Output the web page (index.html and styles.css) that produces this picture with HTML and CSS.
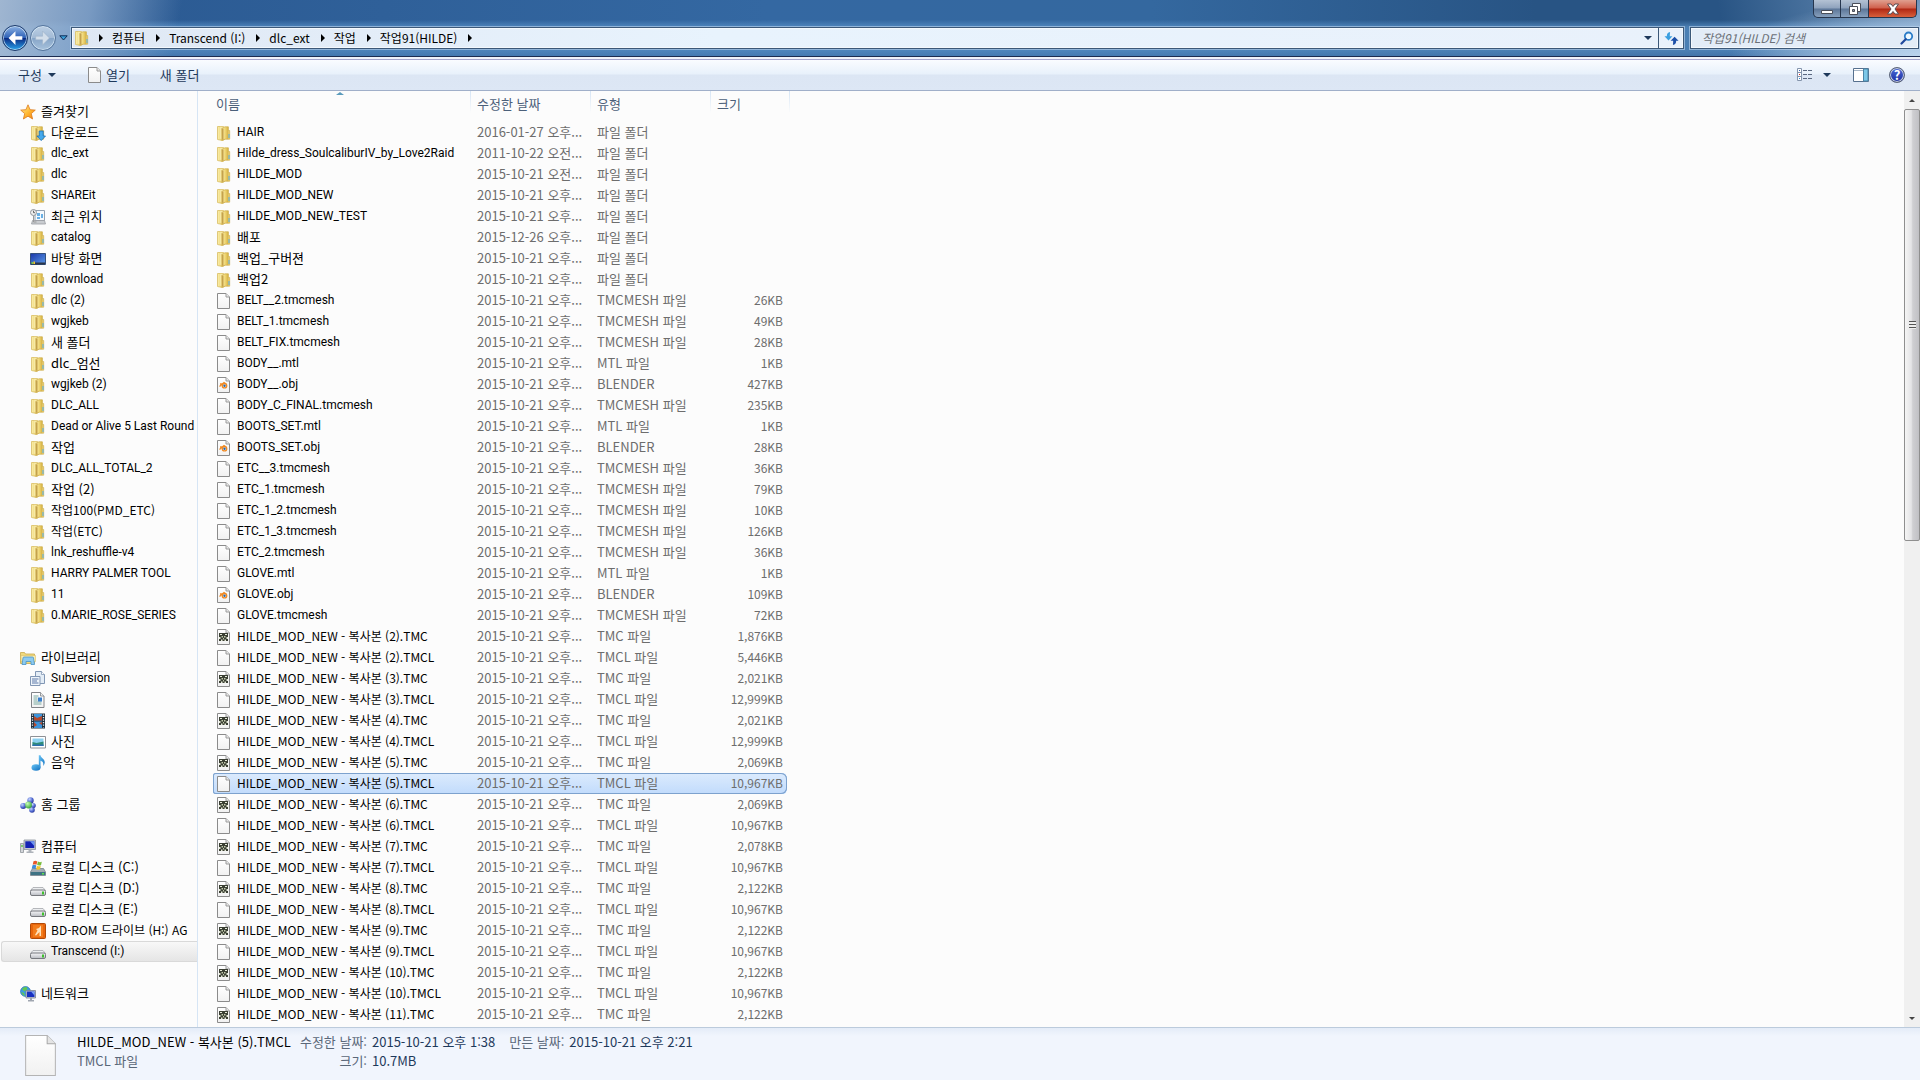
FILE: index.html
```html
<!DOCTYPE html>
<html lang="ko">
<head>
  <meta charset="UTF-8">
  <title>작업91(HILDE)</title>
  <link rel="stylesheet" href="styles.css">
</head>
<body>
  <!-- Icon sprite, referenced with <use> -->
  <svg class="sprite" aria-hidden="true">
    <defs>
      <linearGradient id="g-gold" x1="0" x2="1" y1="0" y2="0"><stop offset="0" stop-color="#fbf0b0"/><stop offset=".5" stop-color="#f0d878"/><stop offset="1" stop-color="#d6b040"/></linearGradient>
      <linearGradient id="g-star" x1="0" x2="1" y1="0" y2="1"><stop offset="0" stop-color="#fff3a0"/><stop offset=".55" stop-color="#ffb52e"/><stop offset="1" stop-color="#f07a10"/></linearGradient>
      <linearGradient id="g-page" x1="0" x2="0" y1="0" y2="1"><stop offset="0" stop-color="#fff"/><stop offset="1" stop-color="#f1f1f1"/></linearGradient>
      <linearGradient id="g-disk" x1="0" x2="0" y1="0" y2="1"><stop offset="0" stop-color="#f6f6f8"/><stop offset="1" stop-color="#b9bcc2"/></linearGradient>
      <linearGradient id="g-blue" x1="0" x2="1" y1="0" y2="1"><stop offset="0" stop-color="#1a36a8"/><stop offset="1" stop-color="#5c9be8"/></linearGradient>
      <linearGradient id="g-note" x1="0" x2="1" y1="0" y2="1"><stop offset="0" stop-color="#6ac4f4"/><stop offset="1" stop-color="#0d6fc0"/></linearGradient>
      <radialGradient id="g-ball" cx=".35" cy=".3" r=".8"><stop offset="0" stop-color="#c4d4ff"/><stop offset=".6" stop-color="#4a62cc"/><stop offset="1" stop-color="#26338c"/></radialGradient>
      <radialGradient id="g-green" cx=".35" cy=".3" r=".8"><stop offset="0" stop-color="#c8ffb8"/><stop offset="1" stop-color="#2c9c2c"/></radialGradient>
    </defs>
    <symbol id="folder" viewBox="0 0 16 16">
      <path d="M1.500 1.500h6l1 1v12l-2 1-5-1z" fill="url(#g-gold)" stroke="#d8bc62" stroke-width=".8"/>
      <path d="M4 1.800h5.500v12H4z" fill="#f6e9a6"/>
      <path d="M5.600 3.500 9 1.800h3.400v12.400H9l-3.200 1.300z" fill="url(#g-gold)" stroke="#cfae4c" stroke-width=".7"/>
      <path d="M6.800 3.500v11.300" stroke="#b8923a" stroke-width="1.200"/>
      <path d="M12.400 5.500h1.300v8.700h-1.300" fill="#e5c964" stroke="#cfae4e" stroke-width=".6"/>
      <path d="M13 9v4" stroke="#55aee6" stroke-width="1"/>
    </symbol>
    <symbol id="download" viewBox="0 0 16 16">
      <use href="#folder"/>
      <path d="M9.200 6h4v5h2.300l-4.300 4.600L6.900 11h2.300z" fill="#44a9ec" stroke="#1b6db3" stroke-width=".8"/>
    </symbol>
    <symbol id="recent" viewBox="0 0 16 16">
      <path d="M5 1.500h9.500v10H5z" fill="#f4f9fd" stroke="#94a2b0"/>
      <path d="M7 4h3v3H7zM11 5h2v4h-2zM7 8h3v2H7z" fill="#6ab0e4"/>
      <path d="M2.500 11.500h12l1 3.500h-14z" fill="#c9ccd0" stroke="#9a9da2" stroke-width=".8"/>
      <path d="M3.500 7v6h3" fill="none" stroke="#999" stroke-width="1"/>
      <circle cx="3.500" cy="3.500" r="3" fill="#eee" stroke="#909498"/>
      <path d="M3.500 1.700v2h1.600" fill="none" stroke="#444" stroke-width=".8"/>
    </symbol>
    <symbol id="desktop" viewBox="0 0 16 16">
      <path d="M.5 2.500h15v11H.5z" fill="url(#g-blue)" stroke="#34507e"/>
      <path d="M1 11.500h14v2H1z" fill="#2b3648"/>
      <path d="M1.400 11h2v2h-2z" fill="#6fc45c"/><path d="M3.400 10.500h1.600v2.500H3.400z" fill="#f2c232"/>
    </symbol>
    <symbol id="star" viewBox="0 0 16 16">
      <path d="M8 .8l2.100 4.900 5.200.4-4 3.500 1.300 5.400L8 12.200 3.400 15l1.300-5.400-4-3.500 5.200-.4z" fill="url(#g-star)" stroke="#dd7a1c" stroke-width=".8"/>
    </symbol>
    <symbol id="library" viewBox="0 0 16 16">
      <path d="M.5 2.500h4l1 1.500h9v9.500H.5z" fill="#f0d97c" stroke="#c9a94d" stroke-width=".8"/>
      <path d="M1 5.500h14.500v6H1z" fill="#faedb0" stroke="#dabf68" stroke-width=".6"/>
      <path d="M3 8q0-1 1-1h8.500q1 0 1 1l1 6.500h-3.500v-3h-5v3H2z" fill="#8ccaf0" stroke="#4793c8" stroke-width=".8"/>
    </symbol>
    <symbol id="subversion" viewBox="0 0 16 16">
      <path d="M5.500.5h6l3 3v9h-9z" fill="#e4edf6" stroke="#8297b4"/>
      <path d="M11.500.5v3h3" fill="#fff" stroke="#8297b4" stroke-width=".8"/>
      <path d="M.5 5.500h9.500v9H.5z" fill="#eef4fa" stroke="#8297b4"/>
      <path d="M2 8h6.500M2 10h5M2 12h6.500" stroke="#5c79a8"/>
    </symbol>
    <symbol id="document" viewBox="0 0 16 16">
      <path d="M1.500.5h9l3.500 3.500v11.500H1.500z" fill="url(#g-page)" stroke="#828488"/>
      <path d="M10.500.5v3.500H14" fill="#eee" stroke="#828488" stroke-width=".8"/>
      <path d="M3.500 4h5M3.500 6h4M3.500 8h4M3.500 10h8M3.500 12h8" stroke="#7ba9a0"/>
      <path d="M8 5.500h4v4H8z" fill="#3a7fcc"/>
    </symbol>
    <symbol id="video" viewBox="0 0 16 16">
      <path d="M1 .5h14v15H1z" fill="#1f2e3c"/>
      <path d="M4 1h8v6.500H4zM4 8.500h8V15H4z" fill="#3b94dc"/>
      <path d="M4 3l3 2 5-2v4.500H4zM4 9l3 3-3 2zM12 9v3l-3-2z" fill="#b4482c"/>
      <path d="M2.500 1.500v13M13.500 1.500v13" stroke="#e6edf2" stroke-width="1.300" stroke-dasharray="1.300 1.200"/>
    </symbol>
    <symbol id="photo" viewBox="0 0 16 16">
      <path d="M.5 2.500h15v11.500H.5z" fill="#fff" stroke="#8e9196"/>
      <path d="M2.500 4.500h11V12h-11z" fill="#8cd0f0"/>
      <path d="M2.500 8l4 1 7-1.500V12h-11z" fill="#2f8c78"/>
      <path d="M2.500 10.500h11V12h-11z" fill="#2c6fb0"/>
    </symbol>
    <symbol id="music" viewBox="0 0 16 16">
      <ellipse cx="6" cy="12.500" rx="4.500" ry="3.200" fill="url(#g-note)"/>
      <path d="M8.800.3h1.700c.3 3 4.500 3.500 4.200 7.200-.1 1.500-.8 2.600-1.600 3.400.9-3.200-.6-4.700-2.600-5.200v7H8.800z" fill="url(#g-note)"/>
    </symbol>
    <symbol id="homegroup" viewBox="0 0 16 16">
      <circle cx="10.500" cy="3.500" r="3.200" fill="url(#g-ball)"/>
      <circle cx="3.200" cy="9" r="3" fill="url(#g-ball)"/>
      <circle cx="13.200" cy="8.500" r="2.600" fill="url(#g-ball)"/>
      <circle cx="12" cy="13" r="2.800" fill="url(#g-ball)"/>
      <circle cx="8.500" cy="8" r="3.400" fill="url(#g-green)"/>
    </symbol>
    <symbol id="computer" viewBox="0 0 16 16">
      <path d="M.5 4.500h3v9h-3z" fill="#d3d6da" stroke="#8f949b" stroke-width=".8"/>
      <path d="M1.300 6h1.400v2H1.300z" fill="#55c83c"/>
      <path d="M4 1h11.500v9.500H4z" fill="#c4c9d0" stroke="#8c929c" stroke-width=".8"/>
      <path d="M5.300 2.300h9V9h-9z" fill="#1523b4"/><path d="M10 2.300h4.300V7z" fill="#6f97f0"/>
      <path d="M8.500 10.500h3v2h2v1.500h-7v-1.500h2z" fill="#aeb3ba"/>
    </symbol>
    <symbol id="system" viewBox="0 0 16 16">
      <path d="M2.500 8.500h11l2 3.500v3.500H.5V12z" fill="#a2abb2" stroke="#74808a" stroke-width=".8"/>
      <path d="M.8 12h14.400v3H.8z" fill="#3e7284"/><path d="M12 13h2v1.500h-2z" fill="#5ce04a"/>
      <path d="M3.500 1.200q2-1 3.800.2l-.8 3.400q-1.800-1-3.800-.1z" fill="#e8582a"/>
      <path d="M7.900 1.600q2 1 3.900.2L11 5.200q-2 .8-3.900-.1z" fill="#78bc3c"/>
      <path d="M2.500 5.300q2-1 3.800.1l-.8 3.500q-1.800-1-3.800-.1z" fill="#3c8cdc"/>
      <path d="M6.900 5.700q2 1 3.900.2L10 9.300q-2 .8-3.900-.1z" fill="#f4c42c"/>
    </symbol>
    <symbol id="drive" viewBox="0 0 16 16">
      <path d="M3 6.500h10l2.500 3H.5z" fill="#eceef0" stroke="#a4a7ac" stroke-width=".8"/>
      <rect x=".5" y="9" width="15" height="5.500" rx="1.500" fill="url(#g-disk)" stroke="#77797e"/>
      <path d="M12 10.500h2v3h-2z" fill="#3fc02c"/>
    </symbol>
    <symbol id="bdrom" viewBox="0 0 16 16">
      <rect x=".5" y=".5" width="15" height="15" rx="1" fill="#e8660c" stroke="#b04a08"/>
      <path d="M3 2h10v12H3z" fill="#f27c1c"/>
      <path d="M11 2.500v10.500H9.500V9L6 12.500 5 12l2.500-4.500L6 6l3-1z" fill="#ffe0b8"/>
    </symbol>
    <symbol id="network" viewBox="0 0 16 16">
      <circle cx="5.500" cy="5.500" r="5" fill="#3c9ce0" stroke="#2468a8" stroke-width=".6"/>
      <path d="M2 3q2-2.500 4.500-2l1 2-3 2.500zM1 6l3 1 1 3-2-1z" fill="#62c850"/>
      <path d="M6 4.500h9.500V12H6z" fill="#c8ccd4" stroke="#7a8290" stroke-width=".8"/>
      <path d="M7 5.500h7.500V11H7z" fill="#1830c0"/><path d="M11 5.500h3.500v4z" fill="#7aa2f4"/>
      <path d="M10 12h2v2h2v1.500H8V14h2z" fill="#a0a6b0"/>
    </symbol>
    <symbol id="file" viewBox="0 0 16 16">
      <path d="M1.500.5h8.500l3.500 3.500v11.500h-12z" fill="url(#g-page)" stroke="#8b8b8b"/>
      <path d="M10 .5v3.500h3.500" fill="#e9e9e9" stroke="#9c9c9c"/>
    </symbol>
    <symbol id="tmc" viewBox="0 0 16 16">
      <use href="#file"/>
      <path d="M3 4h9v8H3z" fill="#3a3f33"/>
      <path d="M4 5h2v1H4zM9 5h2v1H9zM3 8h1.500v2H3zM10.500 8H12v2h-1.500zM5 10.500h1.500V12H5zM8.500 10.500H10V12H8.500z" fill="#e6ead8"/>
      <path d="M5.500 7h1.500v1.500H5.500zM8 7h1.500v1.500H8zM7 9h1v1.500H7z" fill="#c4ccae"/>
    </symbol>
    <symbol id="blender" viewBox="0 0 16 16">
      <use href="#file"/>
      <path d="M3.500 9.500 8 5.500l2 1.500M4 7h4" fill="none" stroke="#f08a24" stroke-width="1.300"/>
      <circle cx="8.500" cy="8.700" r="2.200" fill="#fff" stroke="#f08a24" stroke-width="1.400"/><circle cx="8.500" cy="8.700" r="1.200" fill="#2b66a8"/>
    </symbol>
  </svg>

  <div class="window">
    <header class="titlebar">
      <div class="caption">
        <button class="caption-btn" aria-label="최소화"><svg viewBox="0 0 14 14"><path d="M1.500 8.500h11v3h-11z" fill="#fff" stroke="#4a4f5a"/></svg></button>
        <button class="caption-btn" aria-label="이전 크기로 복원"><svg viewBox="0 0 14 14"><path d="M4.500 1.500h8v8h-8z" fill="#fff" stroke="#4a4f5a"/><path d="M1.500 4.500h8v8h-8z" fill="#fff" stroke="#4a4f5a"/><path d="M4.500 7.500h2v2h-2z" fill="#8c96a6" stroke="#4a4f5a"/></svg></button>
        <button class="caption-btn close" aria-label="닫기"><svg viewBox="0 0 14 14"><path d="M1.500 2h3.500l2 2.500L9 2h3.500L9 7l3.500 5H9L7 9.500 5 12H1.500L5 7z" fill="#fff" stroke="#5a4a50"/></svg></button>
      </div>
      <div class="navbar">
        <button class="nav-btn back" aria-label="뒤로"><svg viewBox="0 0 24 24"><path d="M12.500 4.500 5 12l7.500 7.500V14H20v-4h-7.500z" fill="#fff"/></svg></button>
        <button class="nav-btn forward" aria-label="앞으로"><svg viewBox="0 0 24 24"><path d="M11.500 4.500 19 12l-7.500 7.500V14H4v-4h7.500z" fill="#d3deea" stroke="#9cb0c8" stroke-width=".6"/></svg></button>
        <button class="history" aria-label="최근 페이지"><svg viewBox="0 0 9 6"><path d="M.8.8h7.400L4.500 5z" fill="#3a9fd8" stroke="#0f2e58"/></svg></button>
        <nav class="address" aria-label="주소">
          <svg class="icon"><use href="#folder"/></svg>
          <i class="arrow"></i><a href="#">컴퓨터</a>
          <i class="arrow"></i><a href="#">Transcend (I:)</a>
          <i class="arrow"></i><a href="#">dlc_ext</a>
          <i class="arrow"></i><a href="#">작업</a>
          <i class="arrow"></i><a href="#">작업91(HILDE)</a>
          <i class="arrow"></i>
          <button class="address-drop" aria-label="이전 위치"><i class="caret"></i></button>
          <button class="refresh" aria-label="새로 고침"><svg viewBox="0 0 16 16"><path d="M6.500 1Q3 1.500 3 5.500H.5L4.800 10 9 5.500H6.200q0-2 .3-4.500z" fill="#3a9fe0"/><path d="M9.500 15Q13 14.500 13 10.500h2.500L11.300 6 7 10.500h2.800q0 2-.3 4.500z" fill="#1c4fa8"/></svg></button>
        </nav>
        <form class="search">
          <input type="text" aria-label="검색" placeholder="작업91(HILDE) 검색">
          <button type="button" aria-label="검색"><svg viewBox="0 0 14 14"><circle cx="8.500" cy="5.200" r="3.700" fill="#eef8ff" stroke="#2b7cc8" stroke-width="1.800"/><path d="M5.700 8.200 1.500 12.500" stroke="#20489c" stroke-width="2.200" stroke-linecap="round"/></svg></button>
        </form>
      </div>
    </header>

    <div class="toolbar">
      <button class="organize">구성 <i class="caret"></i></button>
      <button class="open"><svg class="icon"><use href="#file"/></svg>열기</button>
      <button>새 폴더</button>
      <div class="view-tools">
        <button aria-label="보기 변경"><svg width="16" height="13" viewBox="0 0 16 13"><path d="M.5.5h4v12h-4zM.5 4.500h4M.5 8.500h4" fill="#fff" stroke="#8494ac"/><path d="M2 2h1v1H2z" fill="#3a62b0"/><path d="M2 6h1v1H2z" fill="#d02a2a"/><path d="M2 10h1v1H2z" fill="#2a8ad0"/><path d="M6 2.500h4m1 0h4M6 6.500h4m1 0h4M6 10.500h4m1 0h4" stroke="#5a6880"/></svg></button>
        <button class="view-drop" aria-label="추가 옵션"><i class="caret"></i></button>
        <button class="preview" aria-label="미리 보기 창 표시"><svg width="16" height="14" viewBox="0 0 16 14"><path d="M.5.5h15v13H.5z" fill="#fff" stroke="#56708e"/><path d="M1 2.500h9" stroke="#a9b8c8"/><path d="M10.500 1h4.500v12h-4.500z" fill="#7cc8e8" stroke="#4a86a8"/></svg></button>
        <button aria-label="도움말 보기" class="help">?</button>
      </div>
    </div>

    <div class="content">
      <aside class="tree" id="tree"></aside>
      <main class="files">
        <table>
          <colgroup><col class="c-name"><col class="c-date"><col class="c-type"><col class="c-size"></colgroup>
          <thead>
            <tr><th class="sorted">이름</th><th>수정한 날짜</th><th>유형</th><th>크기</th></tr>
          </thead>
          <tbody id="rows"></tbody>
        </table>
      </main>
      <div class="scrollbar">
        <button aria-label="위로"><i class="up"></i></button>
        <div class="track"><div class="thumb"><i class="grip"></i></div></div>
        <button aria-label="아래로"><i class="down"></i></button>
      </div>
    </div>

    <footer class="details">
      <svg class="preview-icon" viewBox="0 0 32 40"><path d="M1.500.5h21l8 8v31h-29z" fill="url(#g-page)" stroke="#b4b4b4"/><path d="M22.500.5v8h8" fill="#e4e4e4" stroke="#a8a8a8"/></svg>
      <div class="details-name">
        <span class="filename">HILDE_MOD_NEW - 복사본 (5).TMCL</span>
        <span class="kind">TMCL 파일</span>
      </div>
      <dl>
        <dt>수정한 날짜:</dt><dd>2015-10-21 오후 1:38</dd>
        <dt>만든 날짜:</dt><dd>2015-10-21 오후 2:21</dd>
        <dt>크기:</dt><dd>10.7MB</dd>
      </dl>
    </footer>
  </div>

  <script src="app.js"></script>
</body>
</html>
```

FILE: styles.css
```css
* {
  box-sizing: border-box;
}

body {
  margin: 0;
  font: 13px/21px "Noto Sans CJK KR", sans-serif;
  color: #000;
}

button,
input {
  font: inherit;
  color: inherit;
  padding: 0;
  border: 0;
  background: none;
}

a {
  color: inherit;
  text-decoration: none;
}

.sprite {
  position: absolute;
  width: 0;
  height: 0;
}

.icon {
  width: 16px;
  height: 16px;
  flex: none;
}

.window {
  display: flex;
  flex-direction: column;
  height: 100vh;
  overflow: hidden;
  background: #fcfcfc;
}

/* title bar */
.titlebar {
  flex: none;
  height: 60px;
  background:
    linear-gradient(#a4a4cc, #a4a4cc) left bottom / 100% 1px no-repeat,
    linear-gradient(#f0f2fa, #f0f2fa) left bottom / 100% 3px no-repeat,
    linear-gradient(#1c2c50, #1c2c50) left bottom / 100% 4px no-repeat,
    linear-gradient(100deg, rgba(172, 192, 216, .9) 0, rgba(140, 170, 206, .8) 90px, rgba(90, 130, 180, 0) 180px),
    radial-gradient(ellipse 190px 60px at 100% 100%, rgba(200, 222, 244, .9), rgba(120, 160, 200, 0)),
    linear-gradient(260deg, rgba(140, 174, 210, .7) 0, rgba(90, 130, 180, 0) 200px),
    linear-gradient(rgba(90, 140, 192, 0) 20px, rgba(90, 146, 200, .7) 27px 50px, rgba(70, 120, 176, .7)),
    linear-gradient(90deg, #2a5890, #3468a2 40%, #34689f 60%, #285484 80%);
}

.caption {
  display: flex;
  justify-content: flex-end;
  height: 26px;
  padding-right: 3px;
}

.caption-btn {
  display: flex;
  align-items: center;
  justify-content: center;
  width: 28px;
  height: 18px;
  border: 1px solid #26364e;
  border-width: 0 1px 1px 0;
  background: linear-gradient(#b4c2d4, #8fa3bd 8px, #5c7698 9px, #87a0bd);
}

.caption-btn:first-child {
  border-left-width: 1px;
  border-radius: 0 0 0 5px;
}

.caption-btn.close {
  width: 48px;
  border-radius: 0 0 5px 0;
  background: linear-gradient(#e0a090, #d0604c 8px, #b02814 9px, #d8603c);
}

.caption-btn svg {
  width: 14px;
  height: 14px;
}

.navbar {
  display: flex;
  align-items: center;
  height: 24px;
  padding: 0 1px 0 2px;
}

.nav-btn {
  display: flex;
  align-items: center;
  justify-content: center;
  width: 26px;
  height: 26px;
  margin-right: 2px;
  border: 1px solid #1c3a6c;
  border-radius: 50%;
  box-shadow: inset 0 0 0 1px rgba(220, 236, 250, .7);
}

.nav-btn svg {
  width: 22px;
  height: 22px;
}

.back {
  background: linear-gradient(#8fb4e4, #2f62b8 48%, #0b2c84 52%, #2aa4ec);
}

.forward {
  border-color: #54749c;
  background: linear-gradient(#bccfe4, #a3bbd6 48%, #86a5c8 52%, #a8c2dc);
}

.history {
  display: flex;
  width: 9px;
  margin: 0 3px 0 1px;
}

.address,
.search {
  display: flex;
  align-items: center;
  height: 22px;
  border: 1px solid #3c5878;
  background: #e3ecf7;
  box-shadow: inset 0 0 0 1px #f4f8fc, 0 0 0 1px rgba(190, 214, 238, .6);
  font-size: 12px;
}

.address {
  flex: 1;
  margin-right: 6px;
  padding-left: 2px;
  line-height: 19px;
  background: linear-gradient(90deg, #dfe8f4, #e8f3fd 40%, #e9f1fb);
}

.address a {
  padding-bottom: 2px;
}

.arrow {
  margin: 0 9px 0 11px;
  border: 4px solid transparent;
  border-left-color: #000;
  border-right-width: 0;
}

.icon + .arrow {
  margin-left: 9px;
}

.caret {
  display: inline-block;
  border: 4px solid transparent;
  border-top-color: #1e395b;
  border-bottom-width: 0;
}

.address-drop {
  display: flex;
  align-items: center;
  justify-content: center;
  width: 20px;
  height: 20px;
  margin-left: auto;
}

.refresh {
  display: flex;
  align-items: center;
  justify-content: center;
  width: 25px;
  height: 20px;
  border-left: 1px solid #3c5878;
}

.refresh svg {
  width: 15px;
  height: 15px;
}

.search {
  width: 229px;
  padding: 0 4px 0 11px;
}

.search input {
  flex: 1;
  min-width: 0;
  height: 20px;
  padding-bottom: 2px;
  font-style: italic;
}

.search input::placeholder {
  color: #6c7178;
}

.search button {
  display: flex;
}

.search svg {
  width: 14px;
  height: 14px;
}

/* command bar */
.toolbar {
  flex: none;
  display: flex;
  align-items: center;
  height: 31px;
  padding: 0 15px 1px 18px;
  color: #1e395b;
  background: linear-gradient(#fafcff, #e8f1fb 14px, #dce6f4 15px, #dde7f5);
  border-bottom: 1px solid #a0afc9;
}

.toolbar button {
  display: flex;
  align-items: center;
}

.toolbar .caret {
  margin-left: 6px;
}

.toolbar .open {
  margin: 0 30px 0 31px;
}

.toolbar .open .icon {
  margin-right: 3px;
}

.view-tools {
  display: flex;
  align-items: center;
  margin-left: auto;
}

.view-drop {
  margin-left: 4px;
}

.preview {
  margin: 0 20px 0 22px;
}

.toolbar .help {
  justify-content: center;
  width: 16px;
  height: 16px;
  border: 1px solid #5a6478;
  border-radius: 50%;
  box-shadow: inset 0 0 0 1px #c8cede;
  background: linear-gradient(#4a6ad8, #1c2fa0);
  color: #fff;
  font-weight: bold;
  line-height: 14px;
}

/* body */
.content {
  flex: 1;
  display: flex;
  min-height: 0;
}

.tree {
  flex: none;
  width: 198px;
  padding: 10px 0 0 1px;
  overflow: hidden;
  border-right: 1px solid #d6e5f5;
}

.tree ul {
  margin: 0 0 21px;
  padding: 0;
  list-style: none;
}

.tree a {
  display: flex;
  align-items: center;
  height: 21px;
  padding-left: 19px;
  gap: 5px;
  white-space: nowrap;
}

.tree li + li a {
  padding-left: 29px;
}

.tree li a.current {
  border: 1px solid #d9d9d9;
  border-right: 0;
  border-radius: 3px 0 0 3px;
  padding-left: 28px;
  background: linear-gradient(#f8f8f8, #e5e5e5);
}

.label {
  padding-bottom: 2px;
  line-height: 19px;
}

.mixed {
  font-size: 12px;
}

.latin {
  padding-bottom: 0;
  font-family: Roboto, sans-serif;
  font-size: 12px;
}

.files {
  flex: 1;
  padding-left: 15px;
  overflow: hidden;
}

.files table {
  width: 577px;
  table-layout: fixed;
  border-collapse: separate;
  border-spacing: 0;
}

.c-name {
  width: 258px;
}

.c-date,
.c-type {
  width: 120px;
}

.c-size {
  width: 79px;
}

.files th {
  position: relative;
  height: 31px;
  padding: 2px 0 0 6px;
  vertical-align: top;
  text-align: left;
  font-weight: normal;
  color: #4c607a;
  background: linear-gradient(#d6e5f5, #fcfcfc) right top / 1px 22px no-repeat;
}

.files th:first-child {
  padding-left: 3px;
}

.sorted::before {
  content: "";
  position: absolute;
  top: 1px;
  left: 123px;
  border: 4px solid transparent;
  border-bottom-color: #5a9bbc;
  border-width: 0 4px 3px;
}

.files td {
  height: 21px;
  padding: 0 0 2px 6px;
  line-height: 19px;
  white-space: nowrap;
  color: #6d6d6d;
}

.files td:first-child {
  padding: 0 0 0 3px;
  color: #000;
}

.files td:last-child {
  padding-right: 4px;
  border-right: 3px solid transparent;
  background-clip: padding-box;
  font-size: 12px;
  text-align: right;
}

.cell {
  display: flex;
  align-items: center;
  gap: 5px;
  height: 21px;
}

.files .selected td {
  background-image: linear-gradient(#dcebfd, #c1dbfc);
  box-shadow: inset 0 1px #7da2ce, inset 0 -1px #7da2ce;
}

.files .selected td:first-child {
  border-radius: 3px 0 0 3px;
  box-shadow: inset 0 1px #7da2ce, inset 0 -1px #7da2ce, inset 1px 0 #7da2ce;
}

.files .selected td:last-child {
  border-radius: 0 6px 6px 0;
  box-shadow: inset 0 1px #7da2ce, inset 0 -1px #7da2ce, inset -1px 0 #7da2ce;
}

.scrollbar {
  flex: none;
  display: flex;
  flex-direction: column;
  width: 16px;
  background: #f0f0f0;
}

.scrollbar button {
  display: flex;
  align-items: center;
  justify-content: center;
  height: 18px;
}

.up,
.down {
  border: 3px solid transparent;
  border-top-width: 0;
  border-bottom-color: #444;
}

.down {
  transform: rotate(180deg);
}

.track {
  flex: 1;
}

.thumb {
  display: flex;
  align-items: center;
  justify-content: center;
  height: 48%;
  border: 1px solid #8f8f8f;
  border-radius: 2px;
  background: linear-gradient(90deg, #f5f5f5, #e4e4e6 45%, #cfcfd2 55%, #c0c0c4);
}

.grip {
  width: 7px;
  height: 8px;
  background: repeating-linear-gradient(#555 0 1px, #eee 1px 3px);
}

/* details pane */
.details {
  flex: none;
  display: flex;
  height: 53px;
  padding: 4px 0 0 24px;
  line-height: 19px;
  white-space: nowrap;
  color: #1e395b;
  background: linear-gradient(#e4ecf8, #f1f5fd 8px);
  border-top: 1px solid #bccbdc;
}

.preview-icon {
  width: 33px;
  height: 41px;
  margin: 3px 20px 0 0;
}

.details-name {
  display: flex;
  flex-direction: column;
  width: 220px;
}

.filename {
  color: #000;
}

.kind,
.details dt {
  color: #5a6779;
}

.details dl {
  display: grid;
  grid-template-columns: 70px auto auto auto;
  align-content: start;
  column-gap: 5px;
  margin: 0;
}

.details dt {
  text-align: right;
}

.details dd {
  margin: 0;
  padding-right: 9px;
}
```

FILE: app.js
```js
const tree = [
  [['star', '즐겨찾기'], ['download', '다운로드'], ['folder', 'dlc_ext'], ['folder', 'dlc'], ['folder', 'SHAREit'],
    ['recent', '최근 위치'], ['folder', 'catalog'], ['desktop', '바탕 화면'], ['folder', 'download'], ['folder', 'dlc (2)'],
    ['folder', 'wgjkeb'], ['folder', '새 폴더'], ['folder', 'dlc_엄선'], ['folder', 'wgjkeb (2)'], ['folder', 'DLC_ALL'],
    ['folder', 'Dead or Alive 5 Last Round'], ['folder', '작업'], ['folder', 'DLC_ALL_TOTAL_2'], ['folder', '작업 (2)'],
    ['folder', '작업100(PMD_ETC)'], ['folder', '작업(ETC)'], ['folder', 'lnk_reshuffle-v4'], ['folder', 'HARRY PALMER TOOL'],
    ['folder', '11'], ['folder', '0.MARIE_ROSE_SERIES']],
  [['library', '라이브러리'], ['subversion', 'Subversion'], ['document', '문서'], ['video', '비디오'], ['photo', '사진'], ['music', '음악']],
  [['homegroup', '홈 그룹']],
  [['computer', '컴퓨터'], ['system', '로컬 디스크 (C:)'], ['drive', '로컬 디스크 (D:)'], ['drive', '로컬 디스크 (E:)'],
    ['bdrom', 'BD-ROM 드라이브 (H:) AG'], ['drive', 'Transcend (I:)', true]],
  [['network', '네트워크']]
];

// name, size, [date]
const files = [
  ['HAIR', '', '2016-01-27 오후...'],
  ['Hilde_dress_SoulcaliburIV_by_Love2Raid', '', '2011-10-22 오전...'],
  ['HILDE_MOD', '', '2015-10-21 오전...'],
  ['HILDE_MOD_NEW', ''],
  ['HILDE_MOD_NEW_TEST', ''],
  ['배포', '', '2015-12-26 오후...'],
  ['백업_구버젼', ''],
  ['백업2', ''],
  ['BELT__2.tmcmesh', '26KB'],
  ['BELT_1.tmcmesh', '49KB'],
  ['BELT_FIX.tmcmesh', '28KB'],
  ['BODY__.mtl', '1KB'],
  ['BODY__.obj', '427KB'],
  ['BODY_C_FINAL.tmcmesh', '235KB'],
  ['BOOTS_SET.mtl', '1KB'],
  ['BOOTS_SET.obj', '28KB'],
  ['ETC__3.tmcmesh', '36KB'],
  ['ETC_1.tmcmesh', '79KB'],
  ['ETC_1_2.tmcmesh', '10KB'],
  ['ETC_1_3.tmcmesh', '126KB'],
  ['ETC_2.tmcmesh', '36KB'],
  ['GLOVE.mtl', '1KB'],
  ['GLOVE.obj', '109KB'],
  ['GLOVE.tmcmesh', '72KB'],
  ['HILDE_MOD_NEW - 복사본 (2).TMC', '1,876KB'],
  ['HILDE_MOD_NEW - 복사본 (2).TMCL', '5,446KB'],
  ['HILDE_MOD_NEW - 복사본 (3).TMC', '2,021KB'],
  ['HILDE_MOD_NEW - 복사본 (3).TMCL', '12,999KB'],
  ['HILDE_MOD_NEW - 복사본 (4).TMC', '2,021KB'],
  ['HILDE_MOD_NEW - 복사본 (4).TMCL', '12,999KB'],
  ['HILDE_MOD_NEW - 복사본 (5).TMC', '2,069KB'],
  ['HILDE_MOD_NEW - 복사본 (5).TMCL', '10,967KB'],
  ['HILDE_MOD_NEW - 복사본 (6).TMC', '2,069KB'],
  ['HILDE_MOD_NEW - 복사본 (6).TMCL', '10,967KB'],
  ['HILDE_MOD_NEW - 복사본 (7).TMC', '2,078KB'],
  ['HILDE_MOD_NEW - 복사본 (7).TMCL', '10,967KB'],
  ['HILDE_MOD_NEW - 복사본 (8).TMC', '2,122KB'],
  ['HILDE_MOD_NEW - 복사본 (8).TMCL', '10,967KB'],
  ['HILDE_MOD_NEW - 복사본 (9).TMC', '2,122KB'],
  ['HILDE_MOD_NEW - 복사본 (9).TMCL', '10,967KB'],
  ['HILDE_MOD_NEW - 복사본 (10).TMC', '2,122KB'],
  ['HILDE_MOD_NEW - 복사본 (10).TMCL', '10,967KB'],
  ['HILDE_MOD_NEW - 복사본 (11).TMC', '2,122KB']
];

const types = {
  mtl: ['file', 'MTL 파일'],
  obj: ['blender', 'BLENDER'],
  tmcmesh: ['file', 'TMCMESH 파일'],
  TMC: ['tmc', 'TMC 파일'],
  TMCL: ['file', 'TMCL 파일']
};

const selected = 'HILDE_MOD_NEW - 복사본 (5).TMCL';

// icon + label, the label's font depends on the script it is written in
function entry(id, text) {
  let script = '';
  if(!/[가-힣]/.test(text)) script = ' latin';
  else if(/[A-Z]{3}/.test(text)) script = ' mixed';
  return `<svg class="icon"><use href="#${id}"/></svg><span class="label${script}">${text}</span>`;
}

document.querySelector('#tree').innerHTML = tree.map(group => `<ul>${
  group.map(([id, text, current]) =>
    `<li><a href="#"${current ? ' class="current"' : ''}>${entry(id, text)}</a></li>`).join('')
}</ul>`).join('');

document.querySelector('#rows').innerHTML = files.map(([name, size, date = '2015-10-21 오후...']) => {
  const [id, type] = size ? types[name.split('.').pop()] : ['folder', '파일 폴더'];
  return `<tr${name === selected ? ' class="selected"' : ''}>
    <td><div class="cell">${entry(id, name)}</div></td><td>${date}</td><td>${type}</td><td>${size}</td>
  </tr>`;
}).join('');
```
